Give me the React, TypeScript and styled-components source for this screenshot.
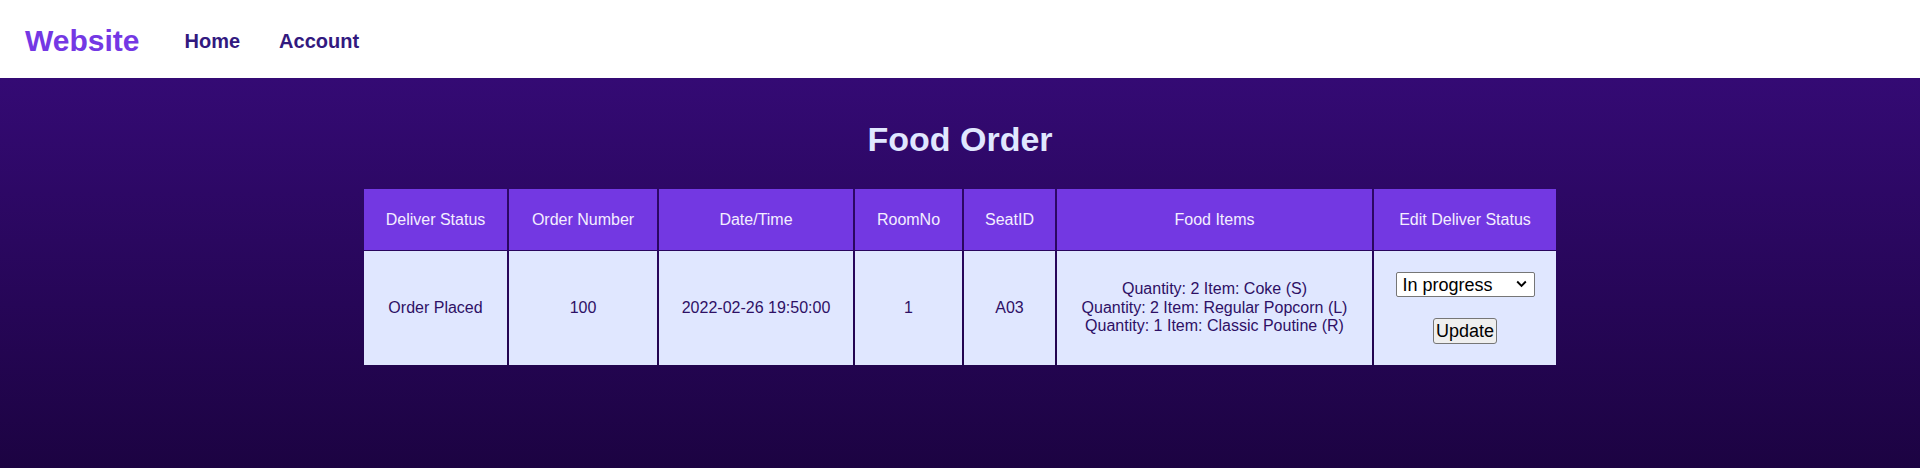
import React from "react";
import styled, { createGlobalStyle } from "styled-components";

const GlobalStyle = createGlobalStyle`
  html, body {
    margin: 0;
    padding: 0;
    font-family: "Liberation Sans", Arial, sans-serif;
  }
  #root {
    min-height: 100vh;
    display: flex;
    flex-direction: column;
  }
`;

const Navbar = styled.nav`
  box-sizing: border-box;
  height: 78px;
  background: #ffffff;
  display: flex;
  align-items: center;
  padding: 3px 0 0 25px;
  flex-shrink: 0;
`;

const Brand = styled.a`
  font-size: 30px;
  font-weight: 700;
  color: #7438e4;
  text-decoration: none;
  margin-right: 45px;
`;

const NavLinks = styled.div`
  display: flex;
  align-items: center;
  gap: 39px;
  padding-top: 1px;
`;

const NavLink = styled.a`
  font-size: 20px;
  font-weight: 700;
  color: #32197f;
  text-decoration: none;
`;

const Main = styled.main`
  flex: 1;
  background: linear-gradient(to bottom, #340a74 0%, #1c0342 100%);
  padding-top: 42px;
  display: flex;
  flex-direction: column;
  align-items: center;
`;

const Title = styled.h1`
  margin: 0;
  font-size: 34px;
  line-height: 39px;
  font-weight: 700;
  color: #e0e7ff;
  text-align: center;
`;

const Table = styled.table`
  margin-top: 29px;
  border-collapse: separate;
  border-spacing: 2px 1px;
  font-size: 16px;
`;

const HeadCell = styled.th<{ $w: number }>`
  width: ${(p) => p.$w}px;
  background: #7338e2;
  color: #f3eeff;
  font-weight: 400;
  padding: 21px;
  line-height: 19px;
  text-align: center;
`;

const Cell = styled.td`
  background: #e0e7ff;
  color: #2e1065;
  padding: 21px;
  line-height: 18.4px;
  text-align: center;
  vertical-align: middle;
`;

const ItemLine = styled.div`
  white-space: nowrap;
`;

const Controls = styled.div`
  display: flex;
  flex-direction: column;
  align-items: center;
  gap: 21px;
`;

const SelectWrap = styled.div`
  position: relative;
  width: 139px;
  height: 25px;
`;

const StatusSelect = styled.select`
  appearance: none;
  -webkit-appearance: none;
  box-sizing: border-box;
  width: 139px;
  height: 25px;
  font-family: "Liberation Sans", Arial, sans-serif;
  font-size: 18px;
  color: #000;
  background: #fff;
  border: 1px solid #767676;
  border-radius: 2px;
  padding: 0 24px 0 6px;
  margin: 0;
`;

const Chevron = styled.svg`
  position: absolute;
  right: 8px;
  top: 8px;
  width: 11px;
  height: 8px;
  pointer-events: none;
`;

const UpdateButton = styled.button`
  font-family: "Liberation Sans", Arial, sans-serif;
  font-size: 18px;
  line-height: 20px;
  color: #000;
  background: #efefef;
  border: 1px solid #767676;
  border-radius: 3px;
  padding: 2px 2px;
`;

const columns: { label: string; w: number }[] = [
  { label: "Deliver Status", w: 101 },
  { label: "Order Number", w: 106 },
  { label: "Date/Time", w: 152 },
  { label: "RoomNo", w: 65 },
  { label: "SeatID", w: 49 },
  { label: "Food Items", w: 273 },
  { label: "Edit Deliver Status", w: 140 },
];

const items = [
  "Quantity: 2 Item: Coke (S)",
  "Quantity: 2 Item: Regular Popcorn (L)",
  "Quantity: 1 Item: Classic Poutine (R)",
];

export default function App() {
  return (
    <>
      <GlobalStyle />
      <Navbar>
        <Brand href="#">Website</Brand>
        <NavLinks>
          <NavLink href="#">Home</NavLink>
          <NavLink href="#">Account</NavLink>
        </NavLinks>
      </Navbar>
      <Main>
        <Title>Food Order</Title>
        <Table>
          <thead>
            <tr>
              {columns.map((c) => (
                <HeadCell key={c.label} $w={c.w}>
                  {c.label}
                </HeadCell>
              ))}
            </tr>
          </thead>
          <tbody>
            <tr>
              <Cell>Order Placed</Cell>
              <Cell>100</Cell>
              <Cell>2022-02-26 19:50:00</Cell>
              <Cell>1</Cell>
              <Cell>A03</Cell>
              <Cell>
                {items.map((it) => (
                  <ItemLine key={it}>{it}</ItemLine>
                ))}
              </Cell>
              <Cell>
                <Controls>
                  <SelectWrap>
                    <StatusSelect defaultValue="In progress">
                      <option>Order Placed</option>
                      <option>In progress</option>
                      <option>Delivered</option>
                    </StatusSelect>
                    <Chevron viewBox="0 0 11 8" aria-hidden="true">
                      <path
                        d="M1.2 1.5 L5.5 5.8 L9.8 1.5"
                        fill="none"
                        stroke="#000"
                        strokeWidth="1.9"
                      />
                    </Chevron>
                  </SelectWrap>
                  <UpdateButton type="button">Update</UpdateButton>
                </Controls>
              </Cell>
            </tr>
          </tbody>
        </Table>
      </Main>
    </>
  );
}
